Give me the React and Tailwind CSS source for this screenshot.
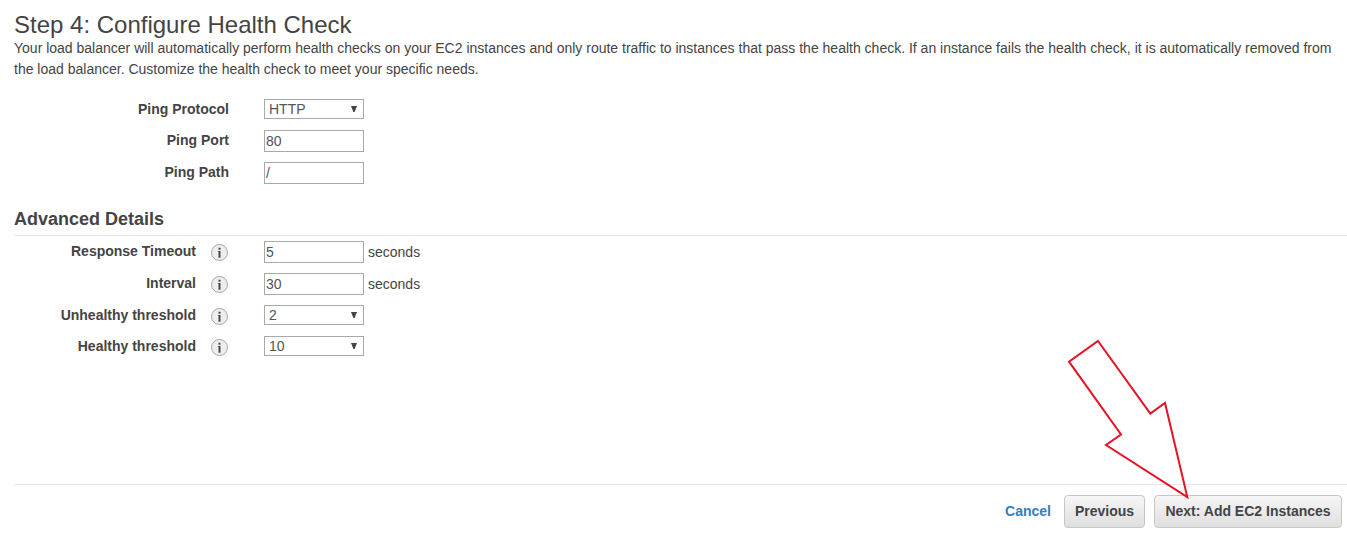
import React from "react";

function InfoIcon() {
  return (
    <svg className="mt-[3px] ml-[14px] h-[18px] w-[18px] shrink-0" viewBox="0 0 18 18">
      <circle cx="9.5" cy="8.5" r="8" fill="#eeeeee" stroke="#a6a6a6" strokeWidth="1" />
      <path d="M8.5 3.8h2v2h-2zM8.5 7h2v6.7h-2zM7.9 7h.6v.8h-.6z" fill="#484848" />
    </svg>
  );
}

function TextField({ value }) {
  return (
    <input
      type="text"
      defaultValue={value}
      className="block h-[22px] w-[100px] border border-[#a9a9a9] bg-white px-px py-0 text-[14px] text-[#555]"
    />
  );
}

function SelectField({ value }) {
  return (
    <div className="grid h-5 w-[100px] border border-[#a9a9a9] bg-white">
      <select
        defaultValue={value}
        className="col-start-1 row-start-1 h-[18px] appearance-none bg-transparent pl-1 text-[14px] leading-[18px] text-[#555]"
      >
        <option>{value}</option>
      </select>
      <svg
        className="pointer-events-none col-start-1 row-start-1 mt-[6px] mr-[6px] h-[6px] w-[6px] justify-self-end"
        viewBox="0 0 6 6"
      >
        <path d="M0 0h6L3.6 6H2.4z" fill="#444" />
      </svg>
    </div>
  );
}

function Row({ label, info, select, value, unit, height }) {
  return (
    <div className={`flex items-start ${height}`}>
      <div
        className={`shrink-0 text-right text-[14px] leading-5 font-bold ${info ? "w-[182px]" : "w-[215px]"}`}
      >
        {label}
      </div>
      {info && <InfoIcon />}
      <div className={info ? "ml-9" : "ml-[35px]"}>
        {select ? <SelectField value={value} /> : <TextField value={value} />}
      </div>
      {unit && <span className="ml-1 text-[14px] leading-[22px]">{unit}</span>}
    </div>
  );
}

const buttonClass =
  "h-[33px] rounded-[4px] border border-[#c6c6c6] bg-linear-to-b from-[#f6f6f6] to-[#dfdfdf] text-center text-[14px] leading-[31px] font-bold text-[#444]";

export default function App() {
  return (
    <div className="relative flex h-[533px] w-[1347px] flex-col overflow-hidden bg-white pl-[14px] font-['Liberation_Sans',Arial,sans-serif] text-[#444]">
      <h1 className="mt-[10px] h-7 text-[24px] leading-[30px] whitespace-nowrap">
        Step 4: Configure Health Check
      </h1>
      <p className="h-[61px] text-[14px] leading-[21px] whitespace-nowrap">
        Your load balancer will automatically perform health checks on your EC2 instances and only
        route traffic to instances that pass the health check. If an instance fails the health check,
        it is automatically removed from
        <br />
        the load balancer. Customize the health check to meet your specific needs.
      </p>
      <div>
        <Row label="Ping Protocol" select value="HTTP" height="h-[31px]" />
        <Row label="Ping Port" value="80" height="h-8" />
        <Row label="Ping Path" value="/" height="h-[46px]" />
      </div>
      <h2 className="h-7 border-b border-[#e8e8e8] text-[18px] leading-[22px] font-bold">
        Advanced Details
      </h2>
      <div className="mt-[5px]">
        <Row label="Response Timeout" info value="5" unit="seconds" height="h-8" />
        <Row label="Interval" info value="30" unit="seconds" height="h-8" />
        <Row label="Unhealthy threshold" info select value="2" height="h-[31px]" />
        <Row label="Healthy threshold" info select value="10" height="h-8" />
      </div>
      <footer className="mt-auto flex h-[49px] items-start justify-end border-t border-[#e8e8e8] pt-[10px] pr-[5px]">
        <a href="#cancel" className="mr-[13px] text-[14px] leading-[33px] font-bold text-[#337ebf]">
          Cancel
        </a>
        <button className={`mr-[9px] w-[81px] ${buttonClass}`}>Previous</button>
        <button className={`w-[188px] ${buttonClass}`}>Next: Add EC2 Instances</button>
      </footer>
      <svg
        className="pointer-events-none absolute top-[330px] left-[1040px] h-[180px] w-[200px]"
        viewBox="0 0 200 180"
      >
        <path
          d="M58 11L110.3 83.5L125 73L147.3 167L66 115L81 104.5L29 31.7Z"
          fill="none"
          stroke="#e81123"
          strokeWidth="2"
        />
      </svg>
    </div>
  );
}
